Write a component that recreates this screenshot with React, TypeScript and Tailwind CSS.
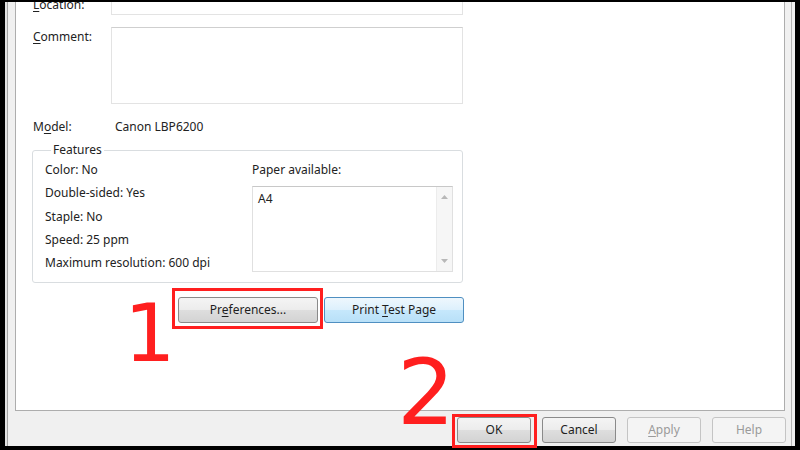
import React from "react";

const btn =
  "h-[26px] rounded-[3px] border text-[12px] flex items-center justify-center";
const normalBtn =
  "border-[#8a8a8a] bg-[linear-gradient(to_bottom,#f4f4f4_0%,#ececec_50%,#dedede_50%,#d3d3d3_100%)] text-[#1e1e1e]";
const disabledBtn = "border-[#c4c4c4] bg-[#f4f4f4] text-[#9a9a9a]";

function U({ c }: { c: string }) {
  return <span className="underline underline-offset-2">{c}</span>;
}

function App() {
  const features = [
    "Color: No",
    "Double-sided: Yes",
    "Staple: No",
    "Speed: 25 ppm",
    "Maximum resolution: 600 dpi",
  ];
  return (
    <div className="relative w-[800px] h-[450px] bg-black pt-[2px] pb-[4px] px-[5px] font-['Noto_Sans',sans-serif] text-[12px] text-[#222] overflow-hidden">
      <div className="h-full flex flex-col bg-[#f0f0f0] shadow-[inset_2px_0_0_#e2e2e2,inset_3px_0_0_#a4a4a4,inset_-3px_0_0_#f0f0f0,inset_-4px_0_0_#b4b4b4]">
        {/* tab page */}
        <div className="flex-1 ml-[10px] mr-[10px] bg-white border border-t-0 border-[#adadad] overflow-hidden pl-[17px]">
          <div className="flex -mt-[9px]">
            <div className="w-[78px] pt-[3px]">
              <U c="L" />ocation:
            </div>
            <div className="w-[352px] h-[22px] border border-[#e3e3e3] border-t-[#cfcfcf]" />
          </div>
          <div className="flex mt-[12px]">
            <div className="w-[78px] pt-[1px]">
              <U c="C" />omment:
            </div>
            <div className="w-[352px] h-[77px] border border-[#e3e3e3] border-t-[#cfcfcf]" />
          </div>
          <div className="flex mt-[15px] leading-[16px]">
            <div className="w-[82px]">
              M<U c="o" />del:
            </div>
            <div>Canon LBP6200</div>
          </div>
          <fieldset className="mt-[7px] w-[431px] -ml-[1px] border border-[#d9dde0] rounded-[3px] pl-[12px] pb-[8px]">
            <legend className="ml-[6px] px-[2px] leading-[16px]">Features</legend>
            <div className="flex">
              <div className="w-[207px] leading-[23.3px]">
                {features.map((f) => (
                  <div key={f}>{f}</div>
                ))}
              </div>
              <div className="flex flex-col">
                <div className="leading-[23.3px]">Paper available:</div>
                <div className="mt-[5px] w-[201px] h-[86px] border border-[#e0e0e0] border-t-[#c8c8c8] flex">
                  <div className="flex-1 pl-[5px] pt-[3px]">A4</div>
                  <div className="w-[16px] bg-[#f6f6f6] border-l border-[#ececec] flex flex-col justify-between items-center py-[8px]">
                    <svg width="7" height="4" viewBox="0 0 7 4">
                      <path d="M0 4 L3.5 0 L7 4 Z" fill="#b8b8b8" />
                    </svg>
                    <svg width="7" height="4" viewBox="0 0 7 4">
                      <path d="M0 0 L3.5 4 L7 0 Z" fill="#b8b8b8" />
                    </svg>
                  </div>
                </div>
              </div>
            </div>
          </fieldset>
          <div className="flex gap-[6px] mt-[14px] ml-[145px]">
            <button className={`${btn} ${normalBtn} w-[140px]`}>
              <span>
                Pr<U c="e" />ferences...
              </span>
            </button>
            <button
              className={`${btn} w-[140px] border-[#4f8fc1] bg-[linear-gradient(to_bottom,#eef7fd_0%,#dcf0fc_50%,#c6e8fc_50%,#b8e0f8_100%)] text-[#1e1e1e]`}
            >
              <span>
                Print <U c="T" />est Page
              </span>
            </button>
          </div>
        </div>
        {/* bottom buttons */}
        <div className="h-[35px] flex justify-end items-start gap-[11px] pt-[6px] pr-[9px]">
          <button className={`${btn} ${normalBtn} w-[74px]`}>OK</button>
          <button className={`${btn} ${normalBtn} w-[74px]`}>Cancel</button>
          <button className={`${btn} ${disabledBtn} w-[74px]`}>
            <span>
              <U c="A" />pply
            </span>
          </button>
          <button className={`${btn} ${disabledBtn} w-[74px]`}>Help</button>
        </div>
      </div>

      {/* red annotations */}
      <div className="absolute left-[172px] top-[288px] w-[151px] h-[41px] border-[3px] border-[#ff1f1f]" />
      <div className="absolute left-[452px] top-[414px] w-[85px] h-[34px] border-[3px] border-[#ff1f1f]" />
      <div className="absolute left-[124px] top-[293px] text-[81px] leading-[81px] font-['DejaVu_Sans',sans-serif] text-[#ff1f1f]">
        1
      </div>
      <div className="absolute left-[397px] top-[347px] text-[91px] leading-[91px] font-['DejaVu_Sans',sans-serif] text-[#ff1f1f]">
        2
      </div>
    </div>
  );
}

export default App;
